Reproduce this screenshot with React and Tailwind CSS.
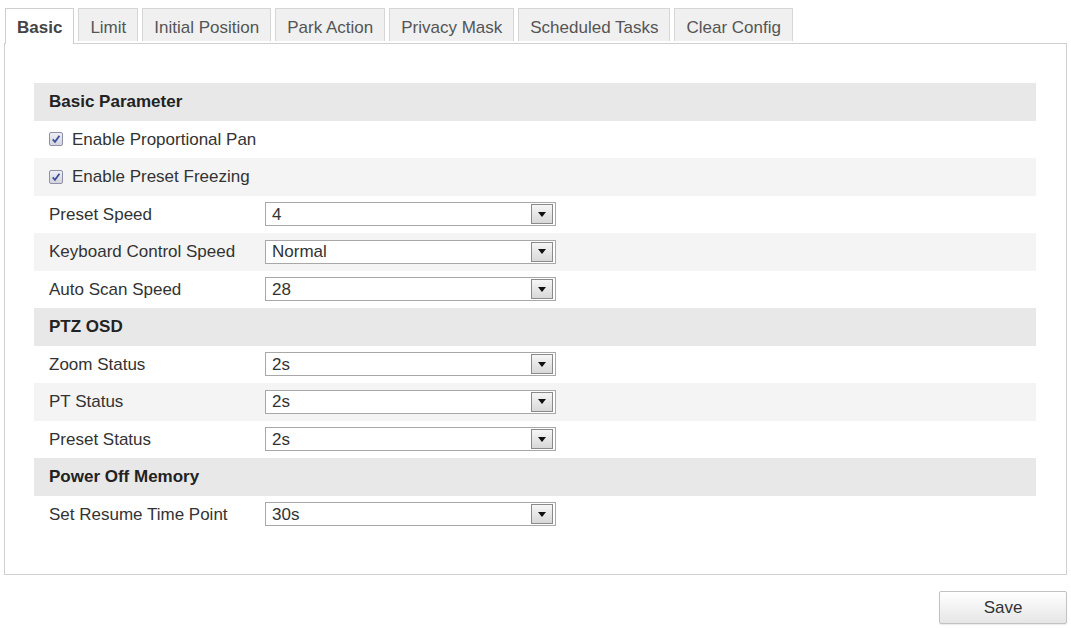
import React from 'react';

const tabs = ['Basic', 'Limit', 'Initial Position', 'Park Action', 'Privacy Mask', 'Scheduled Tasks', 'Clear Config'];

// rows of the Basic tab, in display order
const rows = [
    { type: 'header', label: 'Basic Parameter' },
    { type: 'check', label: 'Enable Proportional Pan' },
    { type: 'check', label: 'Enable Preset Freezing', shade: true },
    { type: 'select', label: 'Preset Speed', value: '4' },
    { type: 'select', label: 'Keyboard Control Speed', value: 'Normal', shade: true },
    { type: 'select', label: 'Auto Scan Speed', value: '28' },
    { type: 'header', label: 'PTZ OSD' },
    { type: 'select', label: 'Zoom Status', value: '2s' },
    { type: 'select', label: 'PT Status', value: '2s', shade: true },
    { type: 'select', label: 'Preset Status', value: '2s' },
    { type: 'header', label: 'Power Off Memory' },
    { type: 'select', label: 'Set Resume Time Point', value: '30s' },
];

function CheckBox() {
    return (
        <span className="w-[14px] h-[14px] border border-[#8f8fa8] rounded-[2px] bg-gradient-to-b from-[#eeeef4] to-[#d4d4e0] flex items-center justify-center">
            <svg width="10" height="10" viewBox="0 0 9 9">
                <path d="M1.5 4.8 L3.6 7 L7.6 1.6" fill="none" stroke="#3d4f9a" strokeWidth="1.6" />
            </svg>
        </span>
    );
}

function SelectBox({ value }) {
    return (
        <div className="w-[291px] h-[24px] border border-[#a8a8a8] bg-white flex items-center justify-between pl-[6px] pr-[2px]">
            <span>{value}</span>
            <span className="w-[22px] h-[20px] border border-[#8a8a8a] bg-gradient-to-b from-[#f6f6f6] to-[#d8d8d8] flex items-center justify-center">
                <svg width="8" height="5" viewBox="0 0 8 5">
                    <path d="M0 0 L8 0 L4 5 Z" fill="#111" />
                </svg>
            </span>
        </div>
    );
}

function Row({ row }) {
    if (row.type === 'header') {
        return (
            <div className="h-[37.5px] bg-[#e8e8e8] flex items-center pl-[15px] font-bold text-[#222]">
                {row.label}
            </div>
        );
    }
    const bg = row.shade ? 'bg-[#f4f4f4]' : 'bg-white';
    if (row.type === 'check') {
        return (
            <div className={`h-[37.5px] ${bg} flex items-center pl-[15px] gap-[9px]`}>
                <CheckBox />
                <span>{row.label}</span>
            </div>
        );
    }
    return (
        <div className={`h-[37.5px] ${bg} flex items-center pl-[15px]`}>
            <span className="w-[216px]">{row.label}</span>
            <SelectBox value={row.value} />
        </div>
    );
}

export default function App() {
    return (
        <div className="w-[1071px] h-[628px] bg-white text-[17px] text-[#333] font-['Liberation_Sans',Arial,sans-serif] pl-[4px] pt-[8px]">
            <div className="flex items-start gap-[4px] pl-[1px] relative z-10">
                {tabs.map((t, i) =>
                    i === 0 ? (
                        <div key={t} className="h-[36px] px-[11px] pt-[6px] border border-b-0 border-[#cfcfcf] bg-white font-bold text-[#444]">
                            {t}
                        </div>
                    ) : (
                        <div key={t} className="h-[33px] px-[11px] pt-[6px] border border-b-0 border-[#d6d6d6] bg-[#f0f0f0] text-[#555]">
                            {t}
                        </div>
                    )
                )}
            </div>
            <div className="-mt-px w-[1063px] h-[532px] border border-[#d0d0d0] pt-[39px] pl-[29px] pr-[30px]">
                {rows.map((r) => (
                    <Row key={r.label} row={r} />
                ))}
            </div>
            <div className="flex justify-end w-[1063px] mt-[16px]">
                <button className="w-[128px] h-[33px] border border-[#c2c2c2] rounded-[2px] bg-gradient-to-b from-white to-[#e6e6e6] shadow-[0_1px_1px_rgba(0,0,0,0.08)] text-[#333]">
                    Save
                </button>
            </div>
        </div>
    );
}
